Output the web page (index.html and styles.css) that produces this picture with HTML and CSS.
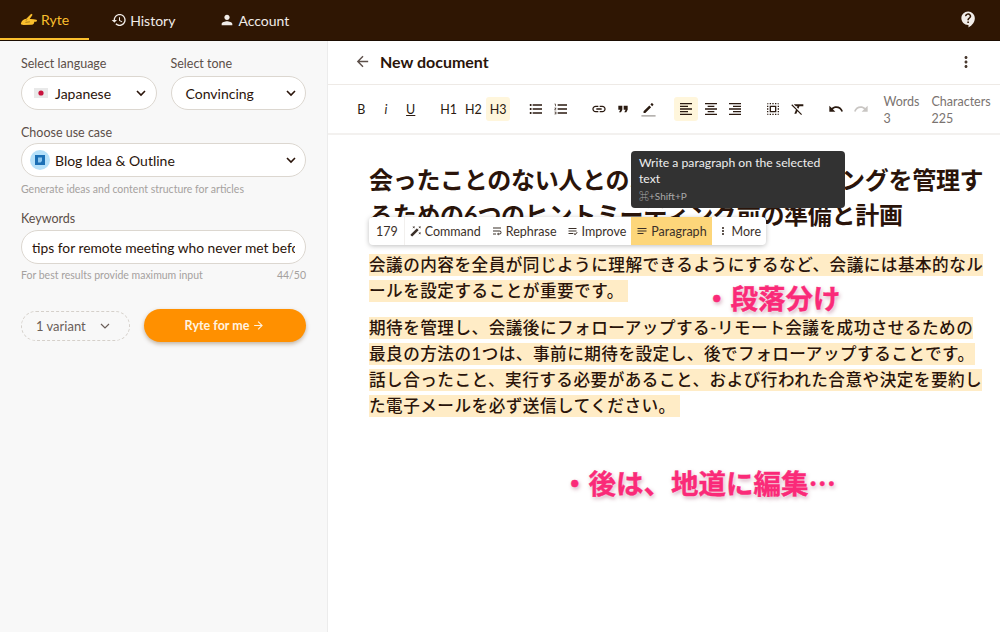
FILE: index.html
```html
<!DOCTYPE html>
<html lang="ja">
<head>
  <meta charset="UTF-8" />
  <meta name="viewport" content="width=device-width, initial-scale=1.0" />
  <title>Ryte</title>
  <link rel="stylesheet" href="styles.css">
</head>
<body>
  <header class="topbar">
    <nav class="tabs">
      <a class="tab tab-active">
        <svg class="logo" viewBox="0 0 20 16"><path d="M1 12.5C1.5 9.5 4 7.5 7 7.2L12.5 1.5 14 2.6 10.8 7.4C13 7.2 16 7.6 18.2 8.2 19.4 8.6 19 10.4 17.6 10.4L15.8 10.4C16 12 15 13.6 13 13.8L4 14C2 14 .8 13.6 1 12.5Z"/><path class="logo-line" d="M6 11.2L11 10.6M8 7.6L6.6 9.4"/></svg>
        Ryte
      </a>
      <a class="tab">
        <svg class="ico" viewBox="0 0 24 24"><path d="M13 3c-4.97 0-9 4.03-9 9H1l3.89 3.89.07.14L9 12H6c0-3.87 3.13-7 7-7s7 3.13 7 7-3.13 7-7 7c-1.93 0-3.68-.79-4.94-2.06l-1.42 1.42C8.27 19.99 10.51 21 13 21c4.97 0 9-4.03 9-9s-4.03-9-9-9zm-1 5v5l4.28 2.54.72-1.21-3.5-2.08V8H12z"/></svg>
        History
      </a>
      <a class="tab">
        <svg class="ico" viewBox="0 0 24 24"><path d="M12 12c2.21 0 4-1.79 4-4s-1.79-4-4-4-4 1.79-4 4 1.79 4 4 4zm0 2c-2.67 0-8 1.34-8 4v2h16v-2c0-2.66-5.33-4-8-4z"/></svg>
        Account
      </a>
    </nav>
    <svg class="help" viewBox="0 0 24 24"><path d="M11.5 2C6.81 2 3 5.81 3 10.5S6.81 19 11.5 19h.5v3c4.86-2.34 8-7 8-11.5C20 5.81 16.19 2 11.5 2zm1 14.5h-2v-2h2v2zm.4-4.78c-.01.01-.02.03-.03.05-.05.08-.1.16-.14.24-.02.03-.03.07-.04.11-.03.07-.06.14-.08.21-.07.21-.1.43-.1.68H10.5c0-.51.08-.94.2-1.3 0-.01 0-.02.01-.03.01-.04.04-.06.05-.1.06-.16.13-.3.22-.44.03-.05.07-.1.1-.15.03-.04.05-.09.08-.12l.01.01c.84-1.1 2.21-1.44 2.32-2.68.09-.98-.61-1.93-1.57-2.13-1.04-.22-1.98.39-2.3 1.28-.14.36-.47.65-.88.65h-.2c-.6 0-1.04-.59-.87-1.17.55-1.82 2.37-3.09 4.43-2.79 1.69.25 3.04 1.64 3.33 3.33.44 2.44-1.63 3.03-2.53 4.35z"/></svg>
  </header>

  <div class="app">
    <aside class="sidebar">
      <div class="field-row">
        <div class="field">
          <label class="label">Select language</label>
          <div class="select select-lang">
            <svg class="flag" viewBox="0 0 14 10"><rect width="14" height="10" fill="#e9e9e9"/><circle cx="7" cy="5" r="2.6" fill="#c8123c"/></svg>
            <span class="select-text">Japanese</span>
            <svg class="chev" viewBox="0 0 12 8"><path d="M2 2l4 4 4-4"/></svg>
          </div>
        </div>
        <div class="field">
          <label class="label">Select tone</label>
          <div class="select select-tone">
            <span class="select-text">Convincing</span>
            <svg class="chev" viewBox="0 0 12 8"><path d="M2 2l4 4 4-4"/></svg>
          </div>
        </div>
      </div>

      <div class="field field-case">
        <label class="label">Choose use case</label>
        <div class="select select-case">
          <span class="case-badge"><svg viewBox="0 0 10 10"><path d="M0 0h10v10H0z" fill="#1b6fb5"/><path d="M3 2.5h4v3.5L5.5 7.5H3z" fill="#8cc6ee"/></svg></span>
          <span class="select-text">Blog Idea &amp; Outline</span>
          <svg class="chev" viewBox="0 0 12 8"><path d="M2 2l4 4 4-4"/></svg>
        </div>
        <p class="hint">Generate ideas and content structure for articles</p>
      </div>

      <div class="field field-keywords">
        <label class="label">Keywords</label>
        <input class="keywords" type="text" value="tips for remote meeting who never met before" readonly />
        <p class="hint hint-split"><span>For best results provide maximum input</span><span>44/50</span></p>
      </div>

      <div class="actions">
        <div class="variant">
          <span>1 variant</span>
          <svg class="chev" viewBox="0 0 12 8"><path d="M2 2l4 4 4-4"/></svg>
        </div>
        <button class="ryte-btn">Ryte for me
          <svg class="ico-sm" viewBox="0 0 24 24"><path d="M12 4l-1.41 1.41L16.17 11H4v2h12.17l-5.58 5.59L12 20l8-8z"/></svg>
        </button>
      </div>
    </aside>

    <main class="doc">
      <div class="doc-head">
        <svg class="back" viewBox="0 0 24 24"><path d="M20 11H7.83l5.59-5.59L12 4l-8 8 8 8 1.41-1.41L7.83 13H20v-2z"/></svg>
        <h2 class="doc-title">New document</h2>
        <svg class="kebab" viewBox="0 0 24 24"><path d="M12 8c1.1 0 2-.9 2-2s-.9-2-2-2-2 .9-2 2 .9 2 2 2zm0 2c-1.1 0-2 .9-2 2s.9 2 2 2 2-.9 2-2-.9-2-2-2zm0 6c-1.1 0-2 .9-2 2s.9 2 2 2 2-.9 2-2-.9-2-2-2z"/></svg>
      </div>

      <div class="toolbar">
        <div class="tool-group">
          <span class="tool tool-b">B</span>
          <span class="tool tool-i">i</span>
          <span class="tool tool-u">U</span>
        </div>
        <div class="tool-group">
          <span class="tool">H1</span>
          <span class="tool">H2</span>
          <span class="tool tool-on">H3</span>
        </div>
        <div class="tool-group">
          <span class="tool"><svg viewBox="0 0 24 24"><path d="M4 10.5c-.83 0-1.5.67-1.5 1.5s.67 1.5 1.5 1.5 1.5-.67 1.5-1.5-.67-1.5-1.5-1.5zm0-6c-.83 0-1.5.67-1.5 1.5S3.17 7.5 4 7.5 5.5 6.83 5.5 6 4.83 4.5 4 4.5zm0 12c-.83 0-1.5.68-1.5 1.5s.68 1.5 1.5 1.5 1.5-.68 1.5-1.5-.67-1.5-1.5-1.5zM7 19h14v-2H7v2zm0-6h14v-2H7v2zm0-8v2h14V5H7z"/></svg></span>
          <span class="tool"><svg viewBox="0 0 24 24"><path d="M2 17h2v.5H3v1h1v.5H2v1h3v-4H2v1zm1-9h1V4H2v1h1v3zm-1 3h1.8L2 13.1v.9h3v-1H3.2L5 10.9V10H2v1zm5-6v2h14V5H7zm0 14h14v-2H7v2zm0-6h14v-2H7v2z"/></svg></span>
        </div>
        <div class="tool-group">
          <span class="tool"><svg viewBox="0 0 24 24"><path d="M3.9 12c0-1.71 1.39-3.1 3.1-3.1h4V7H7c-2.76 0-5 2.24-5 5s2.24 5 5 5h4v-1.9H7c-1.71 0-3.1-1.39-3.1-3.1zM8 13h8v-2H8v2zm9-6h-4v1.9h4c1.71 0 3.1 1.39 3.1 3.1s-1.39 3.1-3.1 3.1h-4V17h4c2.76 0 5-2.24 5-5s-2.24-5-5-5z"/></svg></span>
          <span class="tool"><svg viewBox="0 0 24 24"><path d="M6 17h3l2-4V7H5v6h3zm8 0h3l2-4V7h-6v6h3z"/></svg></span>
          <span class="tool tool-pen"><svg viewBox="0 0 24 24"><path d="M5 14.5V17h2.5l8.2-8.2-2.5-2.5L5 14.5zM18.8 5.7c.3-.3.3-.7 0-1l-1.5-1.5c-.3-.3-.7-.3-1 0l-1.6 1.6 2.5 2.5 1.6-1.6z"/><path class="pen-line" d="M2 20h20v2H2z"/></svg></span>
        </div>
        <div class="tool-group">
          <span class="tool tool-on"><svg viewBox="0 0 24 24"><path d="M15 15H3v2h12v-2zm0-8H3v2h12V7zM3 13h18v-2H3v2zm0 8h18v-2H3v2zM3 3v2h18V3H3z"/></svg></span>
          <span class="tool"><svg viewBox="0 0 24 24"><path d="M7 15v2h10v-2H7zm-4 6h18v-2H3v2zm0-8h18v-2H3v2zm4-6v2h10V7H7zM3 3v2h18V3H3z"/></svg></span>
          <span class="tool"><svg viewBox="0 0 24 24"><path d="M3 21h18v-2H3v2zm6-4h12v-2H9v2zm-6-4h18v-2H3v2zm6-4h12V7H9v2zM3 3v2h18V3H3z"/></svg></span>
        </div>
        <div class="tool-group">
          <span class="tool"><svg viewBox="0 0 24 24"><path d="M3 5h2V3c-1.1 0-2 .9-2 2zm0 8h2v-2H3v2zm4 8h2v-2H7v2zM3 9h2V7H3v2zm10-6h-2v2h2V3zm6 0v2h2c0-1.1-.9-2-2-2zM5 21v-2H3c0 1.1.9 2 2 2zm-2-4h2v-2H3v2zM9 3H7v2h2V3zm2 18h2v-2h-2v2zm8-8h2v-2h-2v2zm0 8c1.1 0 2-.9 2-2h-2v2zm0-12h2V7h-2v2zm0 8h2v-2h-2v2zm-4 4h2v-2h-2v2zm0-16h2V3h-2v2zM7 17h10V7H7v10zm2-8h6v6H9V9z"/></svg></span>
          <span class="tool"><svg viewBox="0 0 24 24"><path d="M3.27 5L2 6.27l6.97 6.97L6.5 19h3l1.57-3.66L16.73 21 18 19.73 3.55 5.27 3.27 5zM6 5v.18L8.82 8h2.4l-.72 1.68 2.1 2.1L14.21 8H20V5H6z"/></svg></span>
        </div>
        <div class="tool-group">
          <span class="tool"><svg viewBox="0 0 24 24"><path d="M12.5 8c-2.65 0-5.05.99-6.9 2.6L2 7v9h9l-3.62-3.62c1.39-1.16 3.16-1.88 5.12-1.88 3.54 0 6.55 2.31 7.6 5.5l2.37-.78C21.08 11.03 17.15 8 12.5 8z"/></svg></span>
          <span class="tool tool-off"><svg viewBox="0 0 24 24"><path d="M18.4 10.6C16.55 8.99 14.15 8 11.5 8c-4.65 0-8.58 3.03-9.96 7.22L3.9 16c1.05-3.19 4.05-5.5 7.6-5.5 1.95 0 3.73.72 5.12 1.88L13 16h9V7l-3.6 3.6z"/></svg></span>
        </div>
        <div class="stats">
          <div class="stat"><span>Words</span><span>3</span></div>
          <div class="stat"><span>Characters</span><span>225</span></div>
        </div>
      </div>

      <div class="editor">
        <h1 class="doc-h">会ったことのない人とのオンラインミーティングを管理するための6つのヒントミーティング前の準備と計画</h1>
        <p class="para para-first"><mark>会議の内容を全員が同じように理解できるようにするなど、会議には基本的なルールを設定することが重要です。&nbsp;</mark></p>
        <p class="para"><mark>期待を管理し、会議後にフォローアップする-リモート会議を成功させるための最良の方法の1つは、事前に期待を設定し、後でフォローアップすることです。話し合ったこと、実行する必要があること、および行われた合意や決定を要約した電子メールを必ず送信してください。&nbsp;</mark></p>

        <div class="float-bar">
          <span class="float-count">179</span>
          <span class="float-item"><svg viewBox="0 0 24 24"><path d="M7.5 5.6L10 7 8.6 4.5 10 2 7.5 3.4 5 2l1.4 2.5L5 7zm12 9.8L17 14l1.4 2.5L17 19l2.5-1.4L22 19l-1.4-2.5L22 14zM22 2l-2.5 1.4L17 2l1.4 2.5L17 7l2.5-1.4L22 7l-1.4-2.5zm-7.63 5.29c-.39-.39-1.02-.39-1.41 0L1.29 18.96c-.39.39-.39 1.02 0 1.41l2.34 2.34c.39.39 1.02.39 1.41 0L16.7 11.05c.39-.39.39-1.02 0-1.41l-2.33-2.35z"/></svg>Command</span>
          <span class="float-item"><svg viewBox="0 0 24 24"><path d="M4 19h6v-2H4v2zM20 5H4v2h16V5zm-3 6H4v2h13.25c1.1 0 2 .9 2 2s-.9 2-2 2H15v-2l-3 3 3 3v-2h2c2.21 0 4-1.79 4-4s-1.79-4-4-4z"/></svg>Rephrase</span>
          <span class="float-item"><svg viewBox="0 0 24 24"><path d="M3 6h16v2H3zM3 11h16v2H3zM3 16h9v2H3zM14 16l2 2 4-4 1.2 1.2L16 20.5 12.8 17.2z"/></svg>Improve</span>
          <span class="float-item float-on"><svg viewBox="0 0 24 24"><path d="M3 18h12v-2H3v2zM3 6v2h18V6H3zm0 7h18v-2H3v2z"/></svg>Paragraph</span>
          <span class="float-item"><svg viewBox="0 0 24 24"><path d="M12 8c1.1 0 2-.9 2-2s-.9-2-2-2-2 .9-2 2 .9 2 2 2zm0 2c-1.1 0-2 .9-2 2s.9 2 2 2 2-.9 2-2-.9-2-2-2zm0 6c-1.1 0-2 .9-2 2s.9 2 2 2 2-.9 2-2-.9-2-2-2z"/></svg>More</span>
        </div>

        <div class="tooltip">
          <p>Write a paragraph on the selected text</p>
          <small>⌘+Shift+P</small>
        </div>

        <div class="note note-para">・段落分け</div>
        <div class="note note-edit">・後は、地道に編集…</div>
      </div>
    </main>
  </div>
</body>
</html>
```

FILE: styles.css
```css
:root {
  --brown: #2f1603;
  --ink: #2a140a;
  --soft: #5c4f49;
  --line: #eeeae6;
  --yellow: #fbbf2d;
  --orange: #ff9000;
  --active: #fff6dc;
  --mark: #ffecc6;
}

* {
  box-sizing: border-box;
}

html, body {
  height: 100%;
}

body {
  margin: 0;
  height: 632px;
  overflow: hidden;
  display: flex;
  flex-direction: column;
  background: #fff;
  color: var(--ink);
  font-family: "Lato", "Noto Sans CJK JP", sans-serif;
  text-spacing-trim: space-all;
}

.topbar {
  height: 41px;
  flex: none;
  display: flex;
  align-items: stretch;
  justify-content: space-between;
  background: var(--brown);
  border-bottom: 1px solid #1c0d02;
}
.tabs {
  display: flex;
}
.tab {
  display: flex;
  align-items: center;
  gap: 3px;
  padding: 0 22px;
  color: #f1ece8;
  font-size: 14px;
}
.tab .ico {
  width: 16px;
  height: 16px;
  fill: #f1ece8;
}
.tab-active {
  padding: 0 20px;
  color: var(--yellow);
  border-bottom: 2px solid var(--yellow);
}
.logo {
  width: 18px;
  height: 15px;
  fill: var(--yellow);
}
.logo-line {
  fill: none;
  stroke: #8a6410;
  stroke-width: .8;
}
.help {
  width: 19px;
  height: 19px;
  margin: 10px 22px 0 0;
  fill: #f1ece8;
}

.app {
  flex: 1;
  display: flex;
  min-height: 0;
}

/* left form */
.sidebar {
  width: 328px;
  flex: none;
  padding: 15px 21px 0;
  background: #f8f8f8;
  border-right: 1px solid #ececec;
}
.field-row {
  display: flex;
  gap: 14px;
}
.field-row .field {
  flex: 1;
}
.label {
  display: block;
  margin-bottom: 5px;
  color: var(--soft);
  font-size: 12.5px;
  line-height: 15px;
}
.select {
  height: 34px;
  display: flex;
  align-items: center;
  background: #fff;
  border: 1px solid #dcd7d0;
  border-radius: 17px;
  font-size: 14px;
}
.select-text {
  flex: 1;
}
.select-lang {
  padding: 0 9px 0 12px;
}
.select-tone {
  padding: 0 8px 0 14px;
}
.select-case {
  padding: 0 8px 0 8px;
}
.flag {
  width: 14px;
  height: 10px;
  margin-right: 7px;
}
.chev {
  width: 12px;
  height: 8px;
  fill: none;
  stroke: var(--ink);
  stroke-width: 1.6;
}
.case-badge {
  width: 20px;
  height: 20px;
  margin-right: 5px;
  display: flex;
  align-items: center;
  justify-content: center;
  background: #b5e0f9;
  border-radius: 50%;
}
.case-badge svg {
  width: 10px;
  height: 10px;
}
.field-case {
  margin-top: 15px;
}
.field-case .label {
  margin-bottom: 3px;
}
.field-keywords {
  margin-top: 15px;
}
.field-keywords .label {
  margin-bottom: 4px;
}
.hint {
  margin: 6px 0 0;
  color: #a5a19e;
  font-size: 10.5px;
  line-height: 13px;
}
.hint-split {
  margin-top: 5px;
  display: flex;
  justify-content: space-between;
}
.keywords {
  width: 100%;
  height: 34px;
  padding: 0 10px;
  background: #fff;
  border: 1px solid #dcd7d0;
  border-radius: 17px;
  color: var(--ink);
  font: 13.8px "Lato", sans-serif;
  outline: none;
}
.actions {
  margin-top: 27px;
  display: flex;
  align-items: center;
  gap: 14px;
}
.variant {
  width: 109px;
  height: 30px;
  padding: 0 18px 0 14px;
  display: flex;
  align-items: center;
  justify-content: space-between;
  border: 1px dashed #d5d0ca;
  border-radius: 15px;
  color: #6a5e58;
  font-size: 13px;
}
.variant .chev {
  stroke: #6a5e58;
  stroke-width: 1.2;
}
.ryte-btn {
  flex: 1;
  height: 33px;
  display: flex;
  align-items: center;
  justify-content: center;
  gap: 3px;
  background: var(--orange);
  border: none;
  border-radius: 17px;
  box-shadow: 0 2px 4px rgba(90,50,0,0.35);
  color: #fff3e0;
  font: 700 12.5px "Lato", sans-serif;
}
.ico-sm {
  width: 13px;
  height: 13px;
  fill: #fff3e0;
}

/* document */
.doc {
  flex: 1;
  min-width: 0;
  display: flex;
  flex-direction: column;
}
.doc-head {
  height: 44px;
  flex: none;
  display: flex;
  align-items: center;
  padding: 0 25px 2px 26px;
  border-bottom: 1px solid var(--line);
}
.back {
  width: 17px;
  height: 17px;
  fill: var(--soft);
}
.doc-title {
  flex: 1;
  margin: 0 0 0 9px;
  font-size: 16px;
  font-weight: 700;
}
.kebab {
  width: 18px;
  height: 18px;
  fill: #4a3a30;
}

.toolbar {
  height: 50px;
  flex: none;
  display: flex;
  align-items: center;
  padding-left: 21px;
  gap: 13.3px;
  border-bottom: 2px solid #f3f1ef;
}
.tool-group {
  display: flex;
}
.tool {
  width: 24.7px;
  height: 24px;
  display: flex;
  align-items: center;
  justify-content: center;
  border-radius: 3px;
  font-size: 12.5px;
  color: #2a1a10;
}
.tool svg {
  width: 16px;
  height: 16px;
  fill: #2a1a10;
}
.tool-pen svg {
  width: 17px;
  height: 17px;
}
.tool-on {
  background: var(--active);
}
.tool-off svg {
  fill: #c9c6c3;
}
.tool-i {
  font-style: italic;
}
.tool-u {
  text-decoration: underline;
}
.pen-line {
  fill: #a8a4a0;
}
.stats {
  display: flex;
  gap: 12px;
  margin: 1px 0 0 -3px;
}
.stat {
  display: flex;
  flex-direction: column;
  color: #7a7370;
  font-size: 12.5px;
  line-height: 17px;
}

.editor {
  position: relative;
  flex: 1;
  padding: 27px 13px 0 41px;
}
.doc-h {
  margin: 0 0 20px;
  font-size: 24px;
  font-weight: 700;
  line-height: 35px;
  letter-spacing: -.3px;
}
.para {
  margin: 0 0 11px;
  font-size: 16.6px;
  font-weight: 500;
  line-height: 26px;
  letter-spacing: .5px;
}
mark {
  padding: 1px 0;
  background: var(--mark);
  color: var(--ink);
}

.float-bar {
  position: absolute;
  left: 41px;
  top: 82px;
  height: 28px;
  display: flex;
  background: #fff;
  border-radius: 4px;
  box-shadow: 0 1px 5px rgba(0,0,0,0.25);
  font-size: 12.5px;
  color: #3b3029;
}
.float-count {
  padding: 0 6px 0 7px;
  display: flex;
  align-items: center;
  border-right: 1px solid #f2f0ee;
}
.float-item {
  padding: 0 5px;
  display: flex;
  align-items: center;
  gap: 3px;
}
.float-item svg {
  width: 12px;
  height: 12px;
  fill: #3b3029;
}
.float-on {
  background: #fdd67a;
}
.tooltip {
  position: absolute;
  left: 303px;
  top: 16px;
  width: 214px;
  height: 57px;
  padding: 4px 8px;
  background: #323232;
  border-radius: 4px;
  color: #eee;
  font-size: 12.2px;
  line-height: 16px;
}
.tooltip p {
  margin: 0 0 1px;
}
.tooltip small {
  font-size: 10px;
  color: #a9a9a9;
}
.note {
  position: absolute;
  color: #fa2a78;
  font-family: "Noto Sans CJK JP", sans-serif;
  font-size: 27.5px;
  font-weight: 700;
  line-height: 32px;
  white-space: nowrap;
  -webkit-text-stroke: .4px #fa2a78;
  text-shadow: 0 0 3px #fff, 1px 2px 4px rgba(120,0,50,0.4);
}
.note-para {
  left: 375px;
  top: 146px;
}
.note-edit {
  left: 233px;
  top: 331px;
}
```
